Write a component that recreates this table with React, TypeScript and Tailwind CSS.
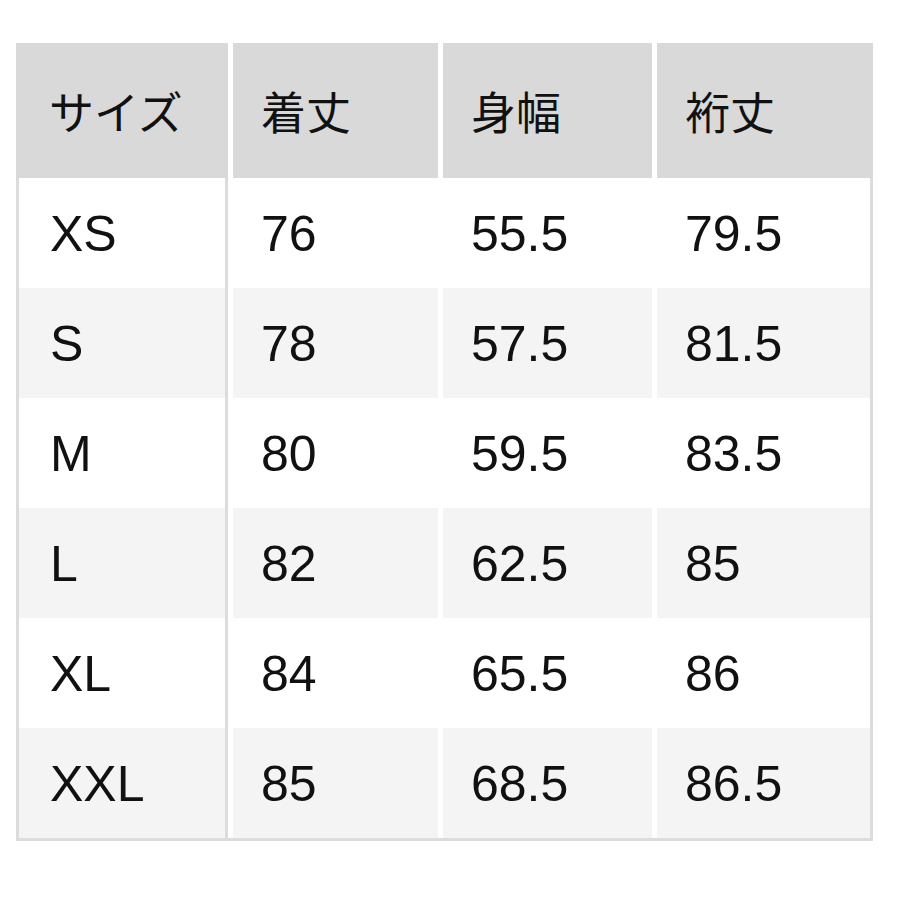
import React from 'react';

const headers = ['サイズ', '着丈', '身幅', '裄丈'];

const rows = [
  ['XS', '76', '55.5', '79.5'],
  ['S', '78', '57.5', '81.5'],
  ['M', '80', '59.5', '83.5'],
  ['L', '82', '62.5', '85'],
  ['XL', '84', '65.5', '86'],
  ['XXL', '85', '68.5', '86.5'],
];

export default function App() {
  return (
    <div className="w-[900px] h-[900px] bg-white pt-[43px] pl-[16px] text-[#111]">
      <div className="w-[857px] flex flex-col">
        {/* header */}
        <div className="grid grid-cols-[212px_205px_209px_216px] gap-[5px] h-[135px]">
          {headers.map((h, i) => (
            <div
              key={h}
              className={`bg-[#d9d9d9] flex items-center ${i === 0 ? 'pl-[33px]' : 'pl-[28px]'}`}
              style={{ fontFamily: '"Noto Sans CJK JP", sans-serif' }}
            >
              <span className="text-[45px] leading-none">{h}</span>
            </div>
          ))}
        </div>

        {/* body */}
        <div className="flex flex-col border-b-[3px] border-[#dcdcdc]">
          {rows.map((r, ri) => {
            const bg = ri % 2 === 1 ? 'bg-[#f4f4f4]' : 'bg-white';
            return (
              <div key={r[0]} className="grid grid-cols-[212px_205px_209px_216px] gap-[5px] h-[110px]">
                {r.map((c, ci) => (
                  <div
                    key={ci}
                    className={`${bg} flex items-center border-[#dcdcdc] ${
                      ci === 0 ? 'pl-[31px] border-l-[3px] border-r-[3px]' : 'pl-[28px]'
                    } ${ci === 3 ? 'border-r-[3px]' : ''}`}
                    style={{ fontFamily: '"Liberation Sans", Arial, sans-serif' }}
                  >
                    <span className="text-[50px] leading-none pt-[2px]">{c}</span>
                  </div>
                ))}
              </div>
            );
          })}
        </div>
      </div>
    </div>
  );
}
